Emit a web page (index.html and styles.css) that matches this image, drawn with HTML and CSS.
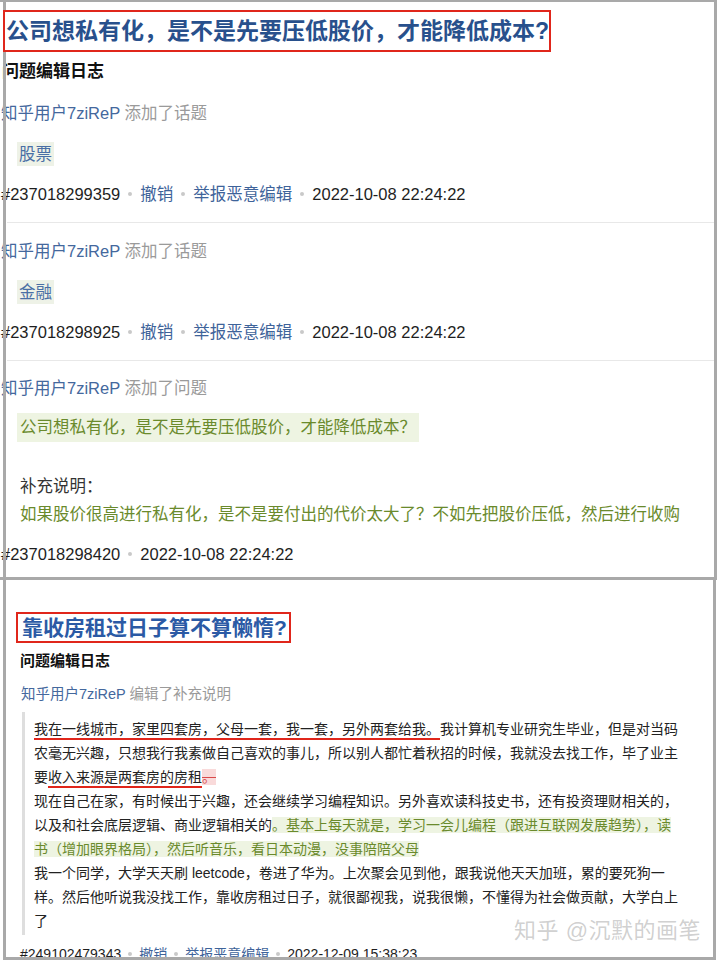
FILE: index.html
```html
<!DOCTYPE html>
<html lang="zh-CN">
<head>
<meta charset="utf-8">
<title>问题编辑日志</title>
<link rel="stylesheet" href="styles.css">
</head>
<body>
<section class="shot shot-a">
  <div class="qtitle-wrap"><h1 class="qtitle">公司想私有化，是不是先要压低股价，才能降低成本?</h1></div>
  <h2 class="log-head">问题编辑日志</h2>

  <div class="entry entry-first">
    <div class="meta"><a class="user">知乎用户7ziReP</a> <span class="act">添加了话题</span></div>
    <div class="tagrow"><span class="tag">股票</span></div>
    <div class="foot">#237018299359<span class="dot"></span><a class="lnk">撤销</a><span class="dot"></span><a class="lnk">举报恶意编辑</a><span class="dot"></span>2022-10-08 22:24:22</div>
  </div>
  <hr class="sep">
  <div class="entry">
    <div class="meta"><a class="user">知乎用户7ziReP</a> <span class="act">添加了话题</span></div>
    <div class="tagrow"><span class="tag">金融</span></div>
    <div class="foot">#237018298925<span class="dot"></span><a class="lnk">撤销</a><span class="dot"></span><a class="lnk">举报恶意编辑</a><span class="dot"></span>2022-10-08 22:24:22</div>
  </div>
  <hr class="sep">
  <div class="entry entry-q">
    <div class="meta"><a class="user">知乎用户7ziReP</a> <span class="act">添加了问题</span></div>
    <div class="qrow"><span class="qhl">公司想私有化，是不是先要压低股价，才能降低成本？</span></div>
    <div class="supp-label">补充说明：</div>
    <div class="supp-text">如果股价很高进行私有化，是不是要付出的代价太大了？不如先把股价压低，然后进行收购</div>
    <div class="foot foot-q">#237018298420<span class="dot"></span>2022-10-08 22:24:22</div>
  </div>
</section>

<section class="shot shot-b">
  <div class="qtitle2-wrap"><h1 class="qtitle2">靠收房租过日子算不算懒惰?</h1></div>
  <h2 class="log-head2">问题编辑日志</h2>
  <div class="meta2"><a class="user">知乎用户7ziReP</a> <span class="act">编辑了补充说明</span></div>
  <blockquote class="quote"><span class="ul">我在一线城市，家里四套房，父母一套，我一套，另外两套给我。</span>我计算机专业研究生毕业，但是对当码<br>农毫无兴趣，只想我行我素做自己喜欢的事儿，所以别人都忙着秋招的时候，我就没去找工作，毕了业主<br>要<span class="ul">收入来源是两套房的房租</span><span class="del">。</span><br>现在自己在家，有时候出于兴趣，还会继续学习编程知识。另外喜欢读科技史书，还有投资理财相关的，<br>以及和社会底层逻辑、商业逻辑相关的<span class="add">。基本上每天就是，学习一会儿编程（跟进互联网发展趋势），读<br>书（增加眼界格局），然后听音乐，看日本动漫，没事陪陪父母</span><br>我一个同学，大学天天刷 leetcode，卷进了华为。上次聚会见到他，跟我说他天天加班，累的要死狗一<br>样。然后他听说我没找工作，靠收房租过日子，就很鄙视我，说我很懒，不懂得为社会做贡献，大学白上<br>了</blockquote>
  <div class="foot2">#249102479343<span class="dot dot-sm"></span><a class="lnk">撤销</a><span class="dot dot-sm"></span><a class="lnk">举报恶意编辑</a><span class="dot dot-sm"></span>2022-12-09 15:38:23</div>
  <div class="watermark">知乎 @沉默的画笔</div>
</section>
</body>
</html>
```

FILE: styles.css
```css
* { box-sizing: border-box; }

html, body {
  margin: 0;
  padding: 0;
  background: #ffffff;
}

body {
  width: 720px;
  height: 960px;
  overflow: hidden;
  font-family: "Liberation Sans", "Noto Sans CJK SC", sans-serif;
  color: #1e1e1e;
}

a { text-decoration: none; }

.user { color: #44689d; }
.act { color: #9a9a9a; }
.lnk { color: #3e639a; }

/* ---------- first screenshot ---------- */
.shot-a {
  position: relative;
  width: 717px;
  height: 580px;
  border-top: 2px solid #a9a9a9;
  border-right: 3px solid #a9a9a9;
  border-bottom: 3px solid #a9a9a9;
  padding-left: 1px;
}

.shot-a::before {
  content: "";
  position: absolute;
  left: 3px;
  top: 0;
  bottom: 0;
  width: 3px;
  background: #a9a9a9;
  z-index: 1;
}

.qtitle-wrap { padding-top: 8px; }

.qtitle {
  position: relative;
  z-index: 2;
  display: inline-block;
  margin: 0 0 0 2px;
  padding: 0 0 0 1px;
  border: 2px solid #e0261b;
  font-size: 23px;
  line-height: 38px;
  font-weight: 700;
  color: #28508c;
  background: #fff;
}

.log-head {
  margin: 8px 0 0 1px;
  font-size: 17px;
  line-height: 24px;
  font-weight: 700;
  color: #111;
}

.entry {
  font-size: 16.5px;
  line-height: 24px;
  padding: 16px 0 16px 0;
}

.entry-first { padding-top: 17px; }

.tagrow { margin-top: 17px; }

.tag {
  display: inline-block;
  margin-left: 16px;
  padding: 0 2px;
  background: #eef2e7;
  color: #4a6fa5;
  line-height: 24px;
}

.foot {
  margin-top: 16px;
  color: #1e1e1e;
  display: flex;
  align-items: center;
}

.dot {
  display: inline-block;
  width: 4px;
  height: 4px;
  border-radius: 50%;
  background: #c9c9c9;
  margin: 0 8px;
}

.sep {
  margin: 0 0 0 6px;
  border: 0;
  border-top: 1px solid #e8e8e8;
  height: 0;
}

.entry-q { padding-top: 15px; }

.qrow { margin-top: 13px; }

.qhl {
  display: inline-block;
  margin-left: 16px;
  padding: 3px 3px;
  line-height: 23px;
  background: #eef4e2;
  color: #6a8a2c;
}

.supp-label {
  margin: 30px 0 0 19px;
  line-height: 28px;
  color: #333;
}

.supp-text {
  margin-left: 19px;
  line-height: 28px;
  color: #6a8a2c;
}

.foot-q { margin-top: 14px; }

/* ---------- second screenshot ---------- */
.shot-b {
  position: relative;
  margin-left: 3px;
  width: 713px;
  height: 380px;
  border-left: 3px solid #a9a9a9;
  border-right: 3px solid #a9a9a9;
  border-bottom: 3px solid #a9a9a9;
  overflow: hidden;
}

.qtitle2-wrap { padding: 32px 0 0 10px; }

.qtitle2 {
  display: inline-block;
  margin: 0;
  padding: 0 2px 0 4px;
  border: 2px solid #e0261b;
  font-size: 21px;
  line-height: 27px;
  font-weight: 700;
  color: #2b5aa5;
}

.log-head2 {
  margin: 8px 0 0 14px;
  font-size: 15px;
  line-height: 20px;
  font-weight: 700;
  color: #111;
}

.meta2 {
  margin: 13px 0 0 15px;
  font-size: 14.5px;
  line-height: 20px;
}

.quote {
  margin: 8px 0 0 16px;
  padding: 5px 0 2px 9px;
  border-left: 3px solid #dedede;
  font-size: 14px;
  line-height: 24px;
  color: #222;
  white-space: nowrap;
}

.ul {
  text-decoration: underline;
  text-decoration-color: #e0261b;
  text-decoration-thickness: 2px;
  text-underline-offset: 4px;
}

.del {
  background: #f9dada;
  color: #d84a4a;
  text-decoration: line-through;
}

.add {
  background: #eef4e2;
  color: #6a8a2c;
}

.foot2 {
  margin: 9px 0 0 14px;
  font-size: 14px;
  line-height: 20px;
  display: flex;
  align-items: center;
  color: #1e1e1e;
}

.dot-sm { width: 4px; height: 4px; margin: 0 7px; }

.watermark {
  position: absolute;
  right: 12px;
  bottom: 13px;
  font-size: 22px;
  line-height: 26px;
  color: rgba(150, 150, 150, 0.45);
  letter-spacing: 0.5px;
}
```
